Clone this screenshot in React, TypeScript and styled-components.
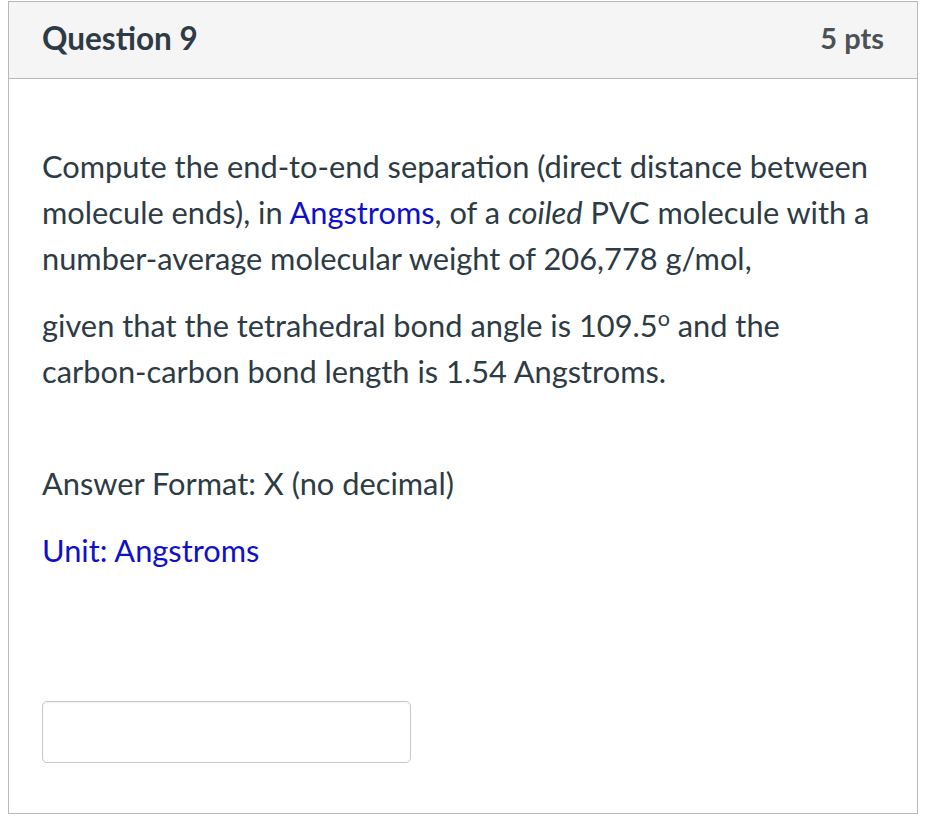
import styled, { createGlobalStyle } from "styled-components";

const GlobalStyle = createGlobalStyle`
  body {
    margin: 0;
    background: #ffffff;
    font-family: Lato, "Open Sans", sans-serif;
    color: #2d3b45;
  }
`;

const Card = styled.div`
  margin: 1px 0 0 8px;
  width: 910px;
  height: 813px;
  box-sizing: border-box;
  border: 1px solid #b8b8b8;
  display: flex;
  flex-direction: column;
`;

const Header = styled.div`
  height: 77px;
  box-sizing: border-box;
  background: #f5f5f5;
  border-bottom: 1px solid #b8b8b8;
  display: flex;
  align-items: center;
  justify-content: space-between;
  padding: 0 33px 5px 33px;
`;

const Title = styled.h2`
  margin: 0;
  font-size: 31.5px;
  font-weight: 700;
  color: #2d3b45;
`;

const Points = styled.span`
  font-size: 29px;
  font-weight: 700;
  color: #4a5257;
`;

const Body = styled.div`
  padding: 65px 33px 0 33px;
  font-size: 30.8px;
  line-height: 46px;
`;

const Para = styled.p<{ $gap?: number }>`
  margin: 0 0 ${(p) => p.$gap ?? 21}px 0;
`;

const Blue = styled.span`
  color: #1010c8;
`;

const Degree = styled.sup`
  font-size: 0.7em;
  line-height: 0;
`;

const AnswerInput = styled.input`
  display: block;
  margin-top: 127px;
  width: 369px;
  height: 62px;
  box-sizing: border-box;
  border: 1px solid #c8c8c8;
  border-radius: 5px;
  box-shadow: inset 0 1px 2px rgba(0, 0, 0, 0.05);
  font-family: inherit;
  font-size: 24px;
  padding: 0 12px;
`;

export default function App() {
  return (
    <>
      <GlobalStyle />
      <Card>
        <Header>
          <Title>Question 9</Title>
          <Points>5 pts</Points>
        </Header>
        <Body>
          <Para>
            Compute the end-to-end separation (direct distance between molecule
            ends), in <Blue>Angstroms</Blue>, of a <i>coiled</i> PVC molecule
            with a number-average molecular weight of 206,778 g/mol,
          </Para>
          <Para $gap={66}>
            given that the tetrahedral bond angle is 109.5<Degree>o</Degree> and
            the carbon-carbon bond length is 1.54 Angstroms.
          </Para>
          <Para>Answer Format: X (no decimal)</Para>
          <Para>
            <Blue>Unit: Angstroms</Blue>
          </Para>
          <AnswerInput type="text" aria-label="Answer" />
        </Body>
      </Card>
    </>
  );
}
